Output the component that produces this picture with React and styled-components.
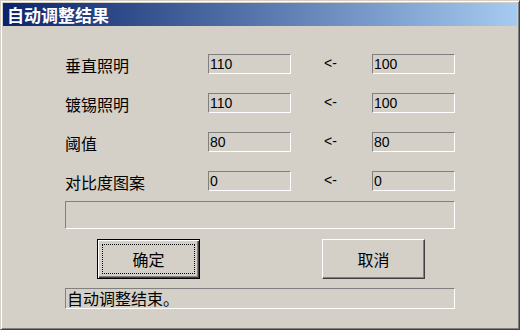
import React from "react";
import styled, { createGlobalStyle, css } from "styled-components";

const GlobalStyle = createGlobalStyle`
  html, body { margin: 0; padding: 0; background: #d4d0c8; }
  body { font-family: "Liberation Sans", "Noto Sans CJK SC", sans-serif; }
  * { box-sizing: border-box; }
`;

const Window = styled.div`
  width: 520px;
  height: 330px;
  background: #d4d0c8;
  border-style: solid;
  border-width: 1px;
  border-color: #d4d0c8 #404040 #404040 #d4d0c8;
  box-shadow: inset 1px 1px #ffffff, inset -1px -1px #808080;
  padding: 2px;
  display: flex;
  flex-direction: column;
`;

const TitleBar = styled.div`
  height: 23px;
  background: linear-gradient(to right, #0a246a, #a6caf0);
  display: flex;
  align-items: center;
  padding-left: 4px;
`;

const Title = styled.span`
  color: #ffffff;
  font-family: "Noto Sans CJK SC", sans-serif;
  font-weight: 700;
  font-size: 17px;
  line-height: 20px;
`;

const Body = styled.div`
  padding: 28px 0 0 62px;
  display: flex;
  flex-direction: column;
  width: 452px;
`;

const FieldGrid = styled.div`
  display: grid;
  grid-template-columns: 143px 83px 81px 83px;
  grid-auto-rows: 20px;
  row-gap: 19px;
  align-items: center;
`;

const Label = styled.span`
  font-family: "Noto Sans CJK SC", sans-serif;
  font-size: 16px;
  line-height: 20px;
  color: #000;
  margin-top: 1px;
`;

const Field = styled.div`
  height: 20px;
  border-style: solid;
  border-width: 1px;
  border-color: #808080 #ffffff #ffffff #808080;
  padding-left: 1px;
  font-family: "Liberation Sans", sans-serif;
  font-size: 14px;
  line-height: 18px;
  color: #000;
`;

const Arrow = styled.span`
  font-family: "Liberation Sans", sans-serif;
  font-size: 14px;
  line-height: 18px;
  padding-left: 33px;
  margin-top: -2px;
  color: #000;
`;

const Panel = styled.div`
  width: 390px;
  height: ${(p) => p.$h}px;
  margin-top: ${(p) => p.$mt}px;
  border-style: solid;
  border-width: 1px;
  border-color: #808080 #ffffff #ffffff #808080;
  padding-left: 1px;
  font-family: "Noto Sans CJK SC", sans-serif;
  font-size: 16px;
  line-height: 19px;
  color: #000;
`;

const ButtonRow = styled.div`
  width: 390px;
  margin-top: 10px;
  padding: 0 30px 0 32px;
  display: flex;
  justify-content: space-between;
`;

const Button = styled.button`
  position: relative;
  width: 103px;
  height: 40px;
  background: #d4d0c8;
  font-family: "Noto Sans CJK SC", sans-serif;
  font-size: 16px;
  line-height: 20px;
  color: #000;
  padding: 0;
  border-style: solid;
  border-width: 1px;
  ${(p) =>
    p.$default
      ? css`
          border-color: #000;
          box-shadow: inset 1px 1px #ffffff, inset -1px -1px #404040,
            inset -2px -2px #808080;
          &::after {
            content: "";
            position: absolute;
            inset: 4px;
            border: 1px dotted #000;
          }
        `
      : css`
          border-color: #ffffff #404040 #404040 #ffffff;
          box-shadow: inset -1px -1px #808080;
        `}
`;

const rows = [
  { label: "垂直照明", cur: "110", prev: "100" },
  { label: "镀锡照明", cur: "110", prev: "100" },
  { label: "阈值", cur: "80", prev: "80" },
  { label: "对比度图案", cur: "0", prev: "0" },
];

export default function App() {
  return (
    <>
      <GlobalStyle />
      <Window>
        <TitleBar>
          <Title>自动调整结果</Title>
        </TitleBar>
        <Body>
          <FieldGrid>
            {rows.map((r) => (
              <React.Fragment key={r.label}>
                <Label>{r.label}</Label>
                <Field>{r.cur}</Field>
                <Arrow>&lt;-</Arrow>
                <Field>{r.prev}</Field>
              </React.Fragment>
            ))}
          </FieldGrid>
          <Panel $h={28} $mt={10} />
          <ButtonRow>
            <Button $default>确定</Button>
            <Button>取消</Button>
          </ButtonRow>
          <Panel $h={21} $mt={9}>自动调整结束。</Panel>
        </Body>
      </Window>
    </>
  );
}
